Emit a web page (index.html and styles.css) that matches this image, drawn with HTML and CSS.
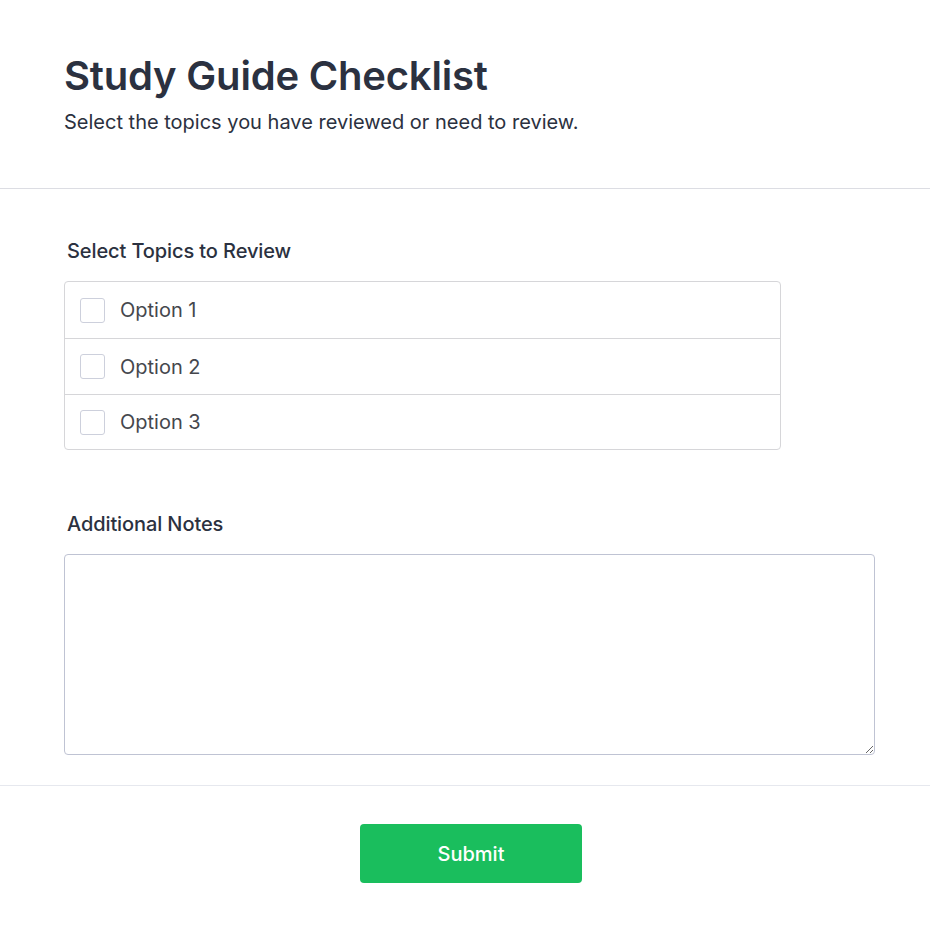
FILE: index.html
```html
<!DOCTYPE html>
<html lang="en">
<head>
<meta charset="utf-8">
<title>Study Guide Checklist</title>
<link rel="stylesheet" href="styles.css">
</head>
<body>
<div class="page">
  <header class="header">
    <h1 class="title">Study Guide Checklist</h1>
    <p class="subtitle">Select the topics you have reviewed or need to review.</p>
  </header>
  <main class="body">
    <section class="field">
      <div class="label">Select Topics to Review</div>
      <div class="options">
        <label class="option"><span class="box"></span><span class="opt-text">Option 1</span></label>
        <label class="option"><span class="box"></span><span class="opt-text">Option 2</span></label>
        <label class="option"><span class="box"></span><span class="opt-text">Option 3</span></label>
      </div>
    </section>
    <section class="field notes-field">
      <div class="label">Additional Notes</div>
      <textarea class="notes"></textarea>
    </section>
  </main>
  <footer class="footer">
    <button class="submit" type="button">Submit</button>
  </footer>
</div>
</body>
</html>
```

FILE: styles.css
```css
* { box-sizing: border-box; }
html, body { margin: 0; padding: 0; background: #ffffff; }
body { font-family: Inter, "Noto Sans", sans-serif; color: #2d3343; }
.page { width: 930px; }
.header { padding: 52px 64px 52px; border-bottom: 1px solid #dcdde3; }
.title { margin: 0; font-size: 40px; line-height: 48px; font-weight: 600; color: #2b3140; letter-spacing: -0.2px; }
.subtitle { margin: 8px 0 0; font-size: 20px; line-height: 28px; font-weight: 400; color: #2b3140; }
.body { padding: 48px 55px 30px 64px; border-bottom: 1px solid #e6e8ee; }
.field { display: flex; flex-direction: column; }
.label { font-size: 20px; line-height: 28px; font-weight: 500; color: #2b3140; padding-left: 3px; margin-bottom: 16px; letter-spacing: -0.1px; }
.options { width: 717px; border: 1px solid #d6d6d9; border-radius: 4px; }
.option { display: flex; align-items: center; height: 56px; padding-left: 15px; border-top: 1px solid #d6d6d9; }
.option:first-child { border-top: none; }
.option:last-child { height: 55px; }
.box { width: 25px; height: 25px; border: 1px solid #cdd0dc; border-radius: 3px; background: #fff; flex: none; }
.opt-text { margin-left: 15px; font-size: 20px; color: #45474d; }
.notes-field { margin-top: 60px; }
.notes { display: block; width: 811px; height: 201px; border: 1px solid #bfc3d3; border-radius: 4px; resize: vertical; font-family: inherit; font-size: 16px; padding: 8px; background: #fff; }
.footer { display: flex; justify-content: center; padding: 38px 0 40px 12px; }
.submit { width: 222px; height: 59px; border: none; border-radius: 4px; background: #1abe5d; color: #ffffff; font-family: inherit; font-size: 20px; font-weight: 500; cursor: pointer; }
```
